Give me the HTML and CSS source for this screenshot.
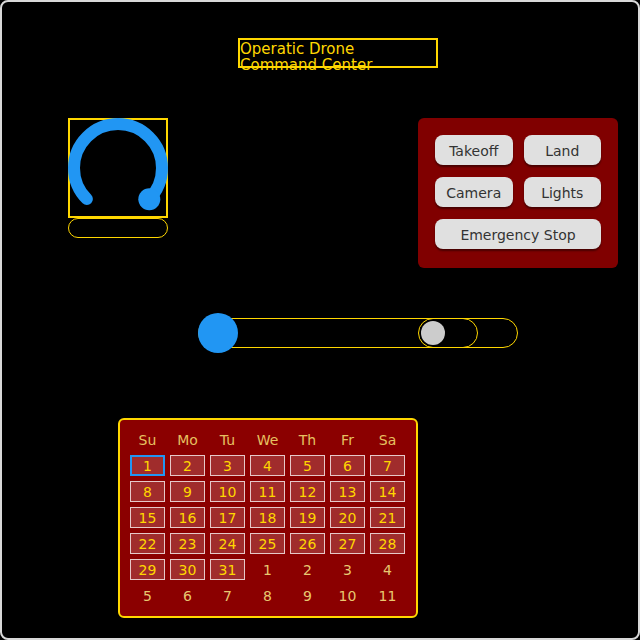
FILE: index.html
```html
<!DOCTYPE html>
<html>
<head>
<meta charset="utf-8">
<link rel="stylesheet" href="styles.css">
</head>
<body>
<div class="screen">
  <div class="title">Operatic Drone Command Center</div>

  <div class="row-mid">
    <div class="knob-col">
      <div class="knob">
        <svg class="knob-svg" width="100" height="100" viewBox="0 0 100 100">
          <path d="M18.89 81.11 A44 44 0 1 1 81.11 81.11" fill="none" stroke="#2196F3" stroke-width="12" stroke-linecap="round"/>
          <circle cx="81.3" cy="81.3" r="11" fill="#2196F3"/>
        </svg>
      </div>
      <div class="knob-value"></div>
    </div>

    <div class="panel">
      <button class="btn">Takeoff</button>
      <button class="btn">Land</button>
      <button class="btn">Camera</button>
      <button class="btn">Lights</button>
      <button class="btn wide">Emergency Stop</button>
    </div>
  </div>

  <div class="slider">
    <div class="slider-thumb"></div>
    <div class="toggle"><div class="toggle-knob"></div></div>
  </div>

  <div class="calendar">
    <div class="cal-grid">
      <div class="dow">Su</div><div class="dow">Mo</div><div class="dow">Tu</div><div class="dow">We</div><div class="dow">Th</div><div class="dow">Fr</div><div class="dow">Sa</div>
      <div class="day sel">1</div><div class="day">2</div><div class="day">3</div><div class="day">4</div><div class="day">5</div><div class="day">6</div><div class="day">7</div>
      <div class="day">8</div><div class="day">9</div><div class="day">10</div><div class="day">11</div><div class="day">12</div><div class="day">13</div><div class="day">14</div>
      <div class="day">15</div><div class="day">16</div><div class="day">17</div><div class="day">18</div><div class="day">19</div><div class="day">20</div><div class="day">21</div>
      <div class="day">22</div><div class="day">23</div><div class="day">24</div><div class="day">25</div><div class="day">26</div><div class="day">27</div><div class="day">28</div>
      <div class="day">29</div><div class="day">30</div><div class="day">31</div><div class="other">1</div><div class="other">2</div><div class="other">3</div><div class="other">4</div>
      <div class="other">5</div><div class="other">6</div><div class="other">7</div><div class="other">8</div><div class="other">9</div><div class="other">10</div><div class="other">11</div>
    </div>
  </div>
</div>
</body>
</html>
```

FILE: styles.css
```css
html, body {
  margin: 0;
  padding: 0;
  background: #000;
}

.screen {
  box-sizing: border-box;
  width: 640px;
  height: 640px;
  border: 2px solid #d8d8d8;
  border-radius: 8px;
  background: #000;
  padding-top: 36px;
  display: flex;
  flex-direction: column;
  align-items: flex-start;
  font-family: "DejaVu Sans", sans-serif;
}

.title {
  box-sizing: border-box;
  margin-left: 236px;
  width: 200px;
  height: 30px;
  border: 2px solid #FFD700;
  color: #FFD700;
  font-size: 15px;
  line-height: 16px;
  padding: 1px 60px 0 0;
}

.row-mid {
  margin-top: 50px;
  margin-left: 66px;
  display: flex;
  align-items: flex-start;
  gap: 250px;
}

.knob-col {
  display: flex;
  flex-direction: column;
  width: 100px;
}

.knob {
  box-sizing: border-box;
  width: 100px;
  height: 100px;
  border: 2px solid #FFD700;
}

.knob-svg {
  display: block;
  margin: -2px;
  overflow: visible;
}

.knob-value {
  box-sizing: border-box;
  width: 100px;
  height: 20px;
  border: 1px solid #FFD700;
  border-radius: 10px;
}

.panel {
  box-sizing: border-box;
  width: 200px;
  height: 150px;
  background: #800000;
  border-radius: 6px;
  padding: 17px 17px 0 17px;
  display: grid;
  grid-template-columns: 1fr 1fr;
  grid-auto-rows: 30px;
  column-gap: 11px;
  row-gap: 12px;
}

.btn {
  font-family: "DejaVu Sans", sans-serif;
  font-size: 14px;
  color: #333;
  background: #e0e0e0;
  border: none;
  border-radius: 8px;
  box-shadow: 0 2px 2px rgba(0, 0, 0, 0.45);
  padding: 2px 0 0 0;
  margin: 0;
}

.btn.wide {
  grid-column: span 2;
}

.slider {
  position: relative;
  box-sizing: border-box;
  margin-top: 50px;
  margin-left: 196px;
  width: 320px;
  height: 30px;
  border: 1px solid #FFD700;
  border-radius: 15px;
}

.slider-thumb {
  position: absolute;
  left: -1px;
  top: -6px;
  width: 40px;
  height: 40px;
  border-radius: 50%;
  background: #2196F3;
}

.toggle {
  position: absolute;
  left: 219px;
  top: -1px;
  box-sizing: border-box;
  width: 60px;
  height: 30px;
  border: 1px solid #FFD700;
  border-radius: 15px;
  padding: 2px;
}

.toggle-knob {
  width: 24px;
  height: 24px;
  border-radius: 50%;
  background: #cccccc;
}

.calendar {
  box-sizing: border-box;
  margin-top: 70px;
  margin-left: 116px;
  width: 300px;
  height: 200px;
  background: #8B0000;
  border: 2px solid #FFD700;
  border-radius: 6px;
  padding: 9px 10px;
}

.cal-grid {
  display: grid;
  grid-template-columns: repeat(7, 35px);
  grid-auto-rows: 21px;
  column-gap: 5px;
  row-gap: 5px;
  font-size: 14px;
}

.dow, .day, .other {
  box-sizing: border-box;
  display: flex;
  align-items: center;
  justify-content: center;
}

.dow {
  color: #e6c060;
}

.other {
  color: #e8c870;
}

.day {
  color: #FFD700;
  background: #a02c2c;
  border: 1px solid #e6c8c8;
}

.day.sel {
  border: 2px solid #2196F3;
}
```
